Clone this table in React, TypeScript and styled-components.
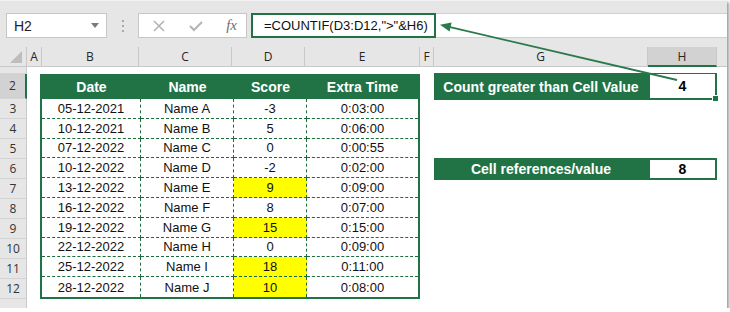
import styled, { createGlobalStyle } from "styled-components";

const GREEN = "#217346";
const DASH = "#1d6b3d";

const GlobalStyle = createGlobalStyle`
  html, body {
    margin: 0;
    padding: 0;
    background: #ffffff;
  }
  body {
    font-family: "Liberation Sans", Arial, sans-serif;
  }
`;

const Window = styled.div`
  position: relative;
  width: 727px;
  height: 308px;
  display: flex;
  flex-direction: column;
  background: #ffffff;
  box-shadow: 2px 2px 3px rgba(0, 0, 0, 0.4);
  overflow: hidden;
`;

const Toolbar = styled.div`
  height: 47px;
  flex-shrink: 0;
  display: flex;
  align-items: flex-start;
  padding: 12px 0 0 6px;
  box-sizing: border-box;
  background: #e6e6e6;
  border-top: 1px solid #f2f2f2;
`;

const NameBox = styled.div`
  width: 101px;
  height: 25px;
  box-sizing: border-box;
  display: flex;
  align-items: center;
  justify-content: space-between;
  padding: 0 7px 0 7px;
  background: #ffffff;
  border: 1px solid #c6c6c6;
  font-size: 14px;
  color: #222;
`;

const Caret = styled.span`
  width: 0;
  height: 0;
  border-left: 4px solid transparent;
  border-right: 4px solid transparent;
  border-top: 5px solid #7a7a7a;
`;

const Grip = styled.div`
  width: 31px;
  height: 25px;
  display: flex;
  flex-direction: column;
  align-items: center;
  justify-content: center;
  gap: 3px;

  span {
    width: 2px;
    height: 2px;
    background: #a8a8a8;
  }
`;

const FuncBox = styled.div`
  width: 109px;
  height: 25px;
  box-sizing: border-box;
  display: flex;
  align-items: center;
  justify-content: space-between;
  padding: 0 9px 0 13px;
  background: #ffffff;
  border: 1px solid #c6c6c6;
`;

const Fx = styled.span`
  font-family: "Liberation Serif", "Times New Roman", serif;
  font-style: italic;
  font-size: 15px;
  color: #6e6e6e;
`;

const FormulaBar = styled.div`
  flex: 1;
  height: 25px;
  margin-left: 4px;
  background: #ffffff;
  border: 1px solid #d0d0d0;
  border-right: none;
  box-sizing: border-box;
  display: flex;
`;

const FormulaHighlight = styled.div`
  width: 185px;
  height: 25px;
  margin: -1px 0 0 -1px;
  box-sizing: border-box;
  border: 2px solid ${GREEN};
  display: flex;
  align-items: center;
  padding-left: 11px;
  font-size: 13px;
  color: #111;
  white-space: nowrap;
`;

const Sheet = styled.div`
  flex: 1;
  display: grid;
  grid-template-columns: 27px 15px 97px 93px 73px 115px 14px 214px 69px 1fr;
  grid-template-rows: 20px 7px 25px repeat(10, 20px) 1fr;
`;

const Corner = styled.div`
  grid-column: 1;
  grid-row: 1;
  background: #e6e6e6;
  border-right: 1px solid #c8c8c8;
  border-bottom: 1px solid #c8c8c8;
  position: relative;

  &::after {
    content: "";
    position: absolute;
    right: 4px;
    bottom: 3px;
    width: 0;
    height: 0;
    border-left: 12px solid transparent;
    border-bottom: 12px solid #bdbdbd;
  }
`;

const ColHead = styled.div<{ $selected?: boolean }>`
  grid-row: 1;
  display: flex;
  align-items: center;
  justify-content: center;
  font-family: "Open Sans", "Liberation Sans", sans-serif;
  font-size: 12px;
  color: #262626;
  background: ${(p) => (p.$selected ? "#d2d2d2" : "#e6e6e6")};
  border-right: 1px solid #c8c8c8;
  border-bottom: ${(p) => (p.$selected ? `2px solid ${GREEN}` : "1px solid #c8c8c8")};
  box-sizing: border-box;
`;

const RowHead = styled.div<{ $selected?: boolean; $align?: string }>`
  grid-column: 1;
  display: flex;
  align-items: ${(p) => p.$align || "center"};
  justify-content: center;
  overflow: hidden;
  font-family: "Open Sans", "Liberation Sans", sans-serif;
  font-size: 12px;
  line-height: 16px;
  color: #333;
  background: ${(p) => (p.$selected ? "#d2d2d2" : "#e6e6e6")};
  border-right: ${(p) => (p.$selected ? `2px solid ${GREEN}` : "1px solid #c8c8c8")};
  border-bottom: 1px solid #d4d4d4;
  box-sizing: border-box;
`;

const DataTable = styled.div`
  grid-column: 3 / 7;
  grid-row: 3 / 14;
  margin: 0 0 0 -2px;
  display: grid;
  grid-template-columns: 99px 93px 73px 1fr;
  grid-template-rows: 25px repeat(10, 1fr);
  border: 2px solid ${GREEN};
  border-top: none;
  box-sizing: border-box;
`;

const HeadCell = styled.div`
  background: ${GREEN};
  color: #ffffff;
  font-weight: bold;
  font-size: 14px;
  display: flex;
  align-items: center;
  justify-content: center;
`;

const Cell = styled.div<{ $last?: boolean; $bottom?: boolean; $hi?: boolean }>`
  display: flex;
  align-items: center;
  justify-content: center;
  font-size: 13px;
  color: #111;
  background: ${(p) => (p.$hi ? "#ffff00" : "#ffffff")};
  border-right: ${(p) => (p.$last ? "none" : `1px dashed ${DASH}`)};
  border-bottom: ${(p) => (p.$bottom ? "none" : `1px dashed ${DASH}`)};
`;

const InfoRow = styled.div<{ $row: number }>`
  grid-column: 8 / 10;
  grid-row: ${(p) => p.$row};
  margin: -1px 0 -1px 0;
  display: grid;
  grid-template-columns: 1fr 69px;
  background: ${GREEN};
`;

const InfoLabel = styled.div`
  display: flex;
  align-items: center;
  justify-content: center;
  color: #ffffff;
  font-weight: bold;
  font-size: 14px;
`;

const InfoValue = styled.div<{ $active?: boolean }>`
  position: relative;
  display: flex;
  align-items: center;
  justify-content: center;
  background: #ffffff;
  border: 2px solid ${GREEN};
  border-top-width: ${(p) => (p.$active ? "1px" : "2px")};
  font-weight: bold;
  font-size: 14px;
  color: #000;

  ${(p) =>
    p.$active &&
    `
    &::after {
      content: "";
      position: absolute;
      right: -4px;
      bottom: -4px;
      width: 5px;
      height: 5px;
      background: ${GREEN};
      border: 1px solid #ffffff;
    }
  `}
`;

const Arrow = styled.svg`
  position: absolute;
  left: 0;
  top: 0;
  pointer-events: none;
`;

const columns = ["A", "B", "C", "D", "E", "F", "G", "H"];

const rows = [
  ["05-12-2021", "Name A", "-3", "0:03:00"],
  ["10-12-2021", "Name B", "5", "0:06:00"],
  ["07-12-2022", "Name C", "0", "0:00:55"],
  ["10-12-2022", "Name D", "-2", "0:02:00"],
  ["13-12-2022", "Name E", "9", "0:09:00"],
  ["16-12-2022", "Name F", "8", "0:07:00"],
  ["19-12-2022", "Name G", "15", "0:15:00"],
  ["22-12-2022", "Name H", "0", "0:09:00"],
  ["25-12-2022", "Name I", "18", "0:11:00"],
  ["28-12-2022", "Name J", "10", "0:08:00"],
];

export default function App() {
  return (
    <>
      <GlobalStyle />
      <Window>
        <Toolbar>
          <NameBox>
            H2
            <Caret />
          </NameBox>
          <Grip>
            <span />
            <span />
            <span />
          </Grip>
          <FuncBox>
            <svg width="14" height="14" viewBox="0 0 14 14">
              <path d="M2 2 L12 12 M12 2 L2 12" stroke="#b4b4b4" strokeWidth="1.6" fill="none" />
            </svg>
            <svg width="16" height="14" viewBox="0 0 16 14">
              <path d="M2 7 L6 11 L14 3" stroke="#b4b4b4" strokeWidth="2" fill="none" />
            </svg>
            <Fx>fx</Fx>
          </FuncBox>
          <FormulaBar>
            <FormulaHighlight>=COUNTIF(D3:D12,"&gt;"&amp;H6)</FormulaHighlight>
          </FormulaBar>
        </Toolbar>

        <Sheet>
          <Corner />
          {columns.map((c, i) => (
            <ColHead key={c} $selected={c === "H"} style={{ gridColumn: i + 2 }}>
              {c}
            </ColHead>
          ))}
          <ColHead style={{ gridColumn: 10, borderRight: "none" }} />

          <RowHead $align="flex-end" style={{ gridRow: 2 }} />
          <RowHead $selected style={{ gridRow: 3 }}>
            2
          </RowHead>
          {rows.map((_, i) => (
            <RowHead key={i} style={{ gridRow: i + 4 }}>
              {i + 3}
            </RowHead>
          ))}
          <RowHead $align="flex-start" style={{ gridRow: 14, borderBottom: "none" }} />

          <DataTable>
            <HeadCell>Date</HeadCell>
            <HeadCell>Name</HeadCell>
            <HeadCell>Score</HeadCell>
            <HeadCell>Extra Time</HeadCell>
            {rows.map((r, ri) =>
              r.map((v, ci) => (
                <Cell
                  key={`${ri}-${ci}`}
                  $last={ci === 3}
                  $bottom={ri === rows.length - 1}
                  $hi={ci === 2 && Number(v) > 8}
                >
                  {v}
                </Cell>
              ))
            )}
          </DataTable>

          <InfoRow $row={3}>
            <InfoLabel>Count greater than Cell Value</InfoLabel>
            <InfoValue $active>4</InfoValue>
          </InfoRow>
          <InfoRow $row={7}>
            <InfoLabel>Cell references/value</InfoLabel>
            <InfoValue>8</InfoValue>
          </InfoRow>
        </Sheet>

        <Arrow width="727" height="308">
          <line x1="677" y1="80" x2="448" y2="26.6" stroke="#2b7a4b" strokeWidth="1.8" />
          <polygon points="440,24.8 451.6,22.4 449.6,31.4" fill="#2b7a4b" />
        </Arrow>
      </Window>
    </>
  );
}
